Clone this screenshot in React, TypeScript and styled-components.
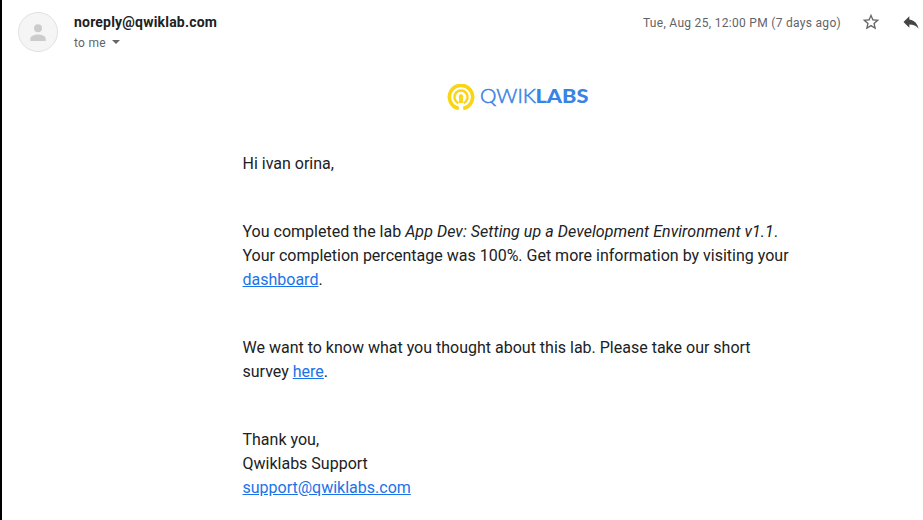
import React from "react";
import styled, { createGlobalStyle } from "styled-components";

const GlobalStyle = createGlobalStyle`
  body {
    margin: 0;
    background: #fff;
    font-family: Roboto, "Liberation Sans", sans-serif;
    overflow: hidden;
  }
`;

const Page = styled.div`
  box-sizing: border-box;
  width: 923px;
  height: 520px;
  border-left: 2px solid #000;
  background: #fff;
  overflow: hidden;
`;

const Header = styled.header`
  display: flex;
  align-items: flex-start;
  height: 84px;
  padding: 0 2px 0 16px;
  box-sizing: border-box;
`;

const Avatar = styled.svg`
  flex: none;
  width: 40px;
  height: 40px;
  margin-top: 12px;
`;

const Sender = styled.div`
  flex: 1;
  padding: 12px 0 0 16px;
`;

const SenderAddress = styled.div`
  font-size: 14px;
  font-weight: 700;
  line-height: 20px;
  letter-spacing: 0.2px;
  color: #202124;
`;

const Recipient = styled.div`
  display: flex;
  align-items: center;
  margin-top: 1px;
  font-size: 12px;
  line-height: 20px;
  letter-spacing: 0.3px;
  color: #5f6368;
`;

const Caret = styled.span`
  margin: -2px 0 0 6px;
  border: 4px solid transparent;
  border-top-color: #666;
  border-bottom: 0;
`;

const Meta = styled.div`
  display: flex;
  align-items: center;
  flex: none;
  height: 20px;
  margin-top: 12px;
`;

const SentAt = styled.time`
  padding-top: 2px;
  font-size: 12px;
  line-height: 20px;
  letter-spacing: 0.3px;
  color: #5f6368;
`;

const Icon = styled.svg`
  flex: none;
  width: 20px;
  height: 20px;
  margin-left: 20px;
`;

const Brand = styled.svg`
  display: block;
  width: 144px;
  height: 28px;
  margin-left: 445px;
`;

const Message = styled.main`
  width: 560px;
  margin: 40px 0 0 240.5px;
  font-size: 16px;
  line-height: 24px;
  color: #202124;
`;

const Paragraph = styled.p`
  margin: 0 0 44px;
`;

const LabTitle = styled.em`
  letter-spacing: 0.06px;
`;

const Link = styled.a`
  color: #1a73e8;
  text-decoration: underline;
`;

export default function App() {
  return (
    <Page>
      <GlobalStyle />
      <Header>
        <Avatar viewBox="0 0 40 40">
          <circle cx="20" cy="20" r="19.5" fill="#f5f5f5" stroke="#e0e0e0" />
          <circle cx="20" cy="16.2" r="4" fill="#ccc" />
          <path d="M12.3 29v-2.2c0-3 5.1-4.3 7.7-4.3s7.7 1.3 7.7 4.3V29z" fill="#ccc" />
        </Avatar>
        <Sender>
          <SenderAddress>noreply@qwiklab.com</SenderAddress>
          <Recipient>
            to me
            <Caret />
          </Recipient>
        </Sender>
        <Meta>
          <SentAt>Tue, Aug 25, 12:00 PM (7 days ago)</SentAt>
          <Icon viewBox="0 0 24 24" fill="#666">
            <path d="M22 9.24l-7.19-.62L12 2 9.19 8.63 2 9.24l5.46 4.73L5.82 21 12 17.27 18.18 21l-1.63-7.03L22 9.24zM12 15.4l-3.76 2.27 1-4.28-3.32-2.88 4.38-.38L12 6.1l1.71 4.04 4.38.38-3.32 2.88 1 4.28L12 15.4z" />
          </Icon>
          <Icon viewBox="0 0 24 24" fill="#444">
            <path d="M10 9V5l-7 7 7 7v-4.1c5 0 8.5 1.6 11 5.1-1-5-4-10-11-11z" />
          </Icon>
        </Meta>
      </Header>
      <Brand viewBox="0 0 144 28" role="img" aria-label="Qwiklabs">
        <g fill="none" stroke="#f9d515">
          <path d="M11.8 24.4A11.6 11.6 0 1 1 16.2 24.4" strokeWidth="3.6" />
          <path d="M11.4 19.1A6.6 6.6 0 1 1 16.6 19.1" strokeWidth="2.5" />
          <path d="M14 12.2V19" strokeWidth="3.8" />
        </g>
        <circle cx="14" cy="12.4" r="2.2" fill="#f9d515" />
        <g fill="#3983e5" fontFamily="Lato, sans-serif" fontSize="18.6">
          <text x="33" y="19.2" fontWeight="300" stroke="#3983e5" strokeWidth="0.5" textLength="56" lengthAdjust="spacingAndGlyphs">QWIK</text>
          <text x="88.5" y="19.2" fontWeight="900" textLength="53" lengthAdjust="spacingAndGlyphs">LABS</text>
        </g>
      </Brand>
      <Message>
        <Paragraph>Hi ivan orina,</Paragraph>
        <Paragraph>
          You completed the lab <LabTitle>App Dev: Setting up a Development Environment v1.1</LabTitle>.
          <br />
          Your completion percentage was 100%. Get more information by visiting your
          <br />
          <Link>dashboard</Link>.
        </Paragraph>
        <Paragraph>
          We want to know what you thought about this lab. Please take our short
          <br />
          survey <Link>here</Link>.
        </Paragraph>
        <Paragraph>
          Thank you,
          <br />
          Qwiklabs Support
          <br />
          <Link>support@qwiklabs.com</Link>
        </Paragraph>
      </Message>
    </Page>
  );
}
